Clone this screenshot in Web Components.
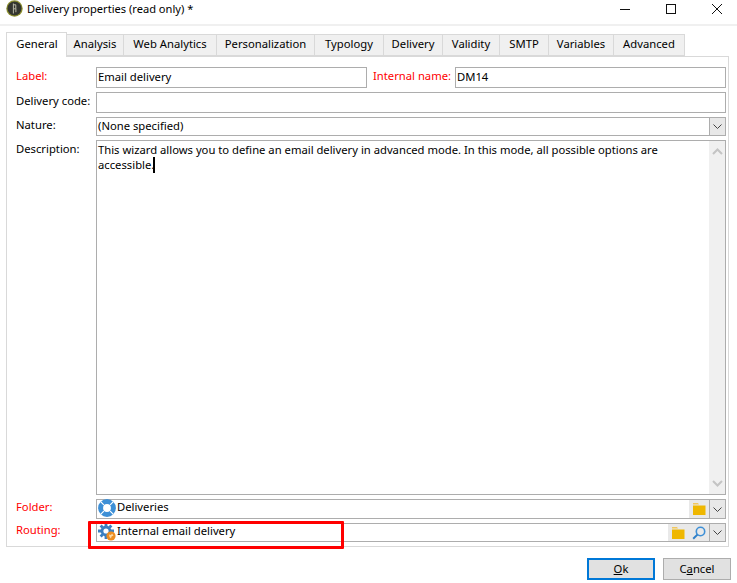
<!DOCTYPE html>
<html>
<head>
<meta charset="utf-8">
<title>Delivery properties</title>
<style>
  html, body { margin: 0; padding: 0; background: #fff; }
  body { font: 11.25px "Noto Sans", "Open Sans", sans-serif; color: #000; width: 737px; height: 583px; overflow: hidden; }
</style>
</head>
<body>
<delivery-window>
  <title-bar slot="title">Delivery properties (read only) *</title-bar>
  <tab-strip slot="tabs" active="General" tabs="General:61,Analysis:57,Web Analytics:93,Personalization:98,Typology:69,Delivery:59,Validity:57,SMTP:49,Variables:65,Advanced:71"></tab-strip>
  <general-form slot="body"></general-form>
  <dialog-button slot="buttons" default><u>O</u>k</dialog-button>
  <dialog-button slot="buttons">C<u>a</u>ncel</dialog-button>
</delivery-window>

<script>
const ICONS = {
  chevDown: `<svg width="11" height="7" viewBox="0 0 11 7"><path d="M1.5 1.5l4 4 4-4" fill="none" stroke="#444" stroke-width="1"/></svg>`,
  chevUp: `<svg width="11" height="7" viewBox="0 0 11 7"><path d="M1 6l4.5-4.5L10 6" fill="none" stroke="#c4c4c4" stroke-width="2"/></svg>`,
  chevDownPale: `<svg width="11" height="7" viewBox="0 0 11 7"><path d="M1 1l4.5 4.5L10 1" fill="none" stroke="#c4c4c4" stroke-width="2"/></svg>`,
  folder: `<svg width="13" height="12" viewBox="0 0 13 12"><path d="M0 0h5l1 1.5H0z" fill="#f2c75c"/><rect x="0" y="2.5" width="12.5" height="9.5" fill="#efb700"/></svg>`,
  search: `<svg width="14" height="14" viewBox="0 0 14 14"><circle cx="8.5" cy="5.5" r="4.2" fill="none" stroke="#3d8fd6" stroke-width="1.6"/><path d="M5.4 8.6L1.2 12.8" stroke="#2f7fc8" stroke-width="2"/></svg>`,
  ring: `<svg width="18" height="18" viewBox="0 0 18 18"><circle cx="9" cy="9" r="6.4" fill="none" stroke="#3d8fd6" stroke-width="5"/><path d="M9 0v4.5M9 13.5V18M0 9h4.5M13.5 9H18" stroke="#fff" stroke-width="1.2" transform="rotate(45 9 9)"/></svg>`,
  gear: `<svg width="18" height="18" viewBox="0 0 18 18"><g fill="#3b7fc0"><circle cx="8" cy="8" r="5.4"/><path d="M6.6 0h2.8v3H6.6zM6.6 13h2.8v3H6.6zM0 6.6h3v2.8H0zM13 6.6h3v2.8h-3zM1.6 3.4l2-2 2 2-2 2zM10.4 3.4l2-2 2 2-2 2zM1.6 12.6l2-2 2 2-2 2z"/></g><circle cx="8" cy="8" r="2.6" fill="#fff"/><circle cx="13" cy="13" r="4.6" fill="#ee8d1f"/><path d="M11 11.5l2 .5 1-1.5 1.5 2-2 1-.5 2-1.5-1.5z" fill="#fbd9a8"/></svg>`,
  logo: `<svg width="17" height="17" viewBox="0 0 17 17"><circle cx="8.5" cy="8.5" r="8.2" fill="#8d9030"/><circle cx="8.5" cy="8.5" r="7" fill="#34362f"/><path d="M7.4 3.5v10M7.4 4.8h2.4v4H7.4M9.9 8.8v3.4" fill="none" stroke="#b9b9a6" stroke-width="1"/></svg>`
};

class TitleBar extends HTMLElement {
  constructor() {
    super();
    this.attachShadow({ mode: 'open' });
    this.shadowRoot.innerHTML = `
      <style>
        :host { display: flex; align-items: center; height: 24px; padding: 0 2px 7px 6px; box-sizing: border-box; }
        .name { margin-left: 4px; flex: 1; line-height: 16px; font-size: 11.1px; }
        .ctl { display: flex; width: 36px; margin-left: 10px; justify-content: center; }
        svg { display: block; }
      </style>
      ${ICONS.logo}
      <span class="name"><slot></slot></span>
      <span class="ctl"><svg width="10" height="10" viewBox="0 0 10 10"><path d="M0 5.5h10" stroke="#111"/></svg></span>
      <span class="ctl"><svg width="10" height="10" viewBox="0 0 10 10"><rect x=".5" y=".5" width="9" height="9" fill="none" stroke="#111"/></svg></span>
      <span class="ctl"><svg width="10" height="10" viewBox="0 0 10 10"><path d="M0 0l10 10M10 0L0 10" stroke="#111"/></svg></span>`;
  }
}

class TabStrip extends HTMLElement {
  constructor() {
    super();
    this.attachShadow({ mode: 'open' });
  }
  connectedCallback() {
    const active = this.getAttribute('active');
    const tabs = this.getAttribute('tabs').split(',').map(t => t.split(':'));
    this.shadowRoot.innerHTML = `
      <style>
        :host { display: flex; align-items: flex-end; height: 24px; margin-left: 6px; position: relative; z-index: 1; }
        .tab { box-sizing: border-box; height: 22px; background: #f0f0f0; border: 1px solid #d9d9d9; border-left: 0;
          display: flex; align-items: center; justify-content: center; padding-bottom: 3px; white-space: nowrap; }
        .tab.on { height: 25px; margin-bottom: -1px; background: #fff; border-left: 1px solid #d9d9d9; border-bottom: 0; padding: 0 0 4px 1px; }
      </style>
      ${tabs.map(([name, w]) => `<div class="tab ${name === active ? 'on' : ''}" style="width:${w}px">${name}</div>`).join('')}`;
  }
}

class TextField extends HTMLElement {
  constructor() {
    super();
    this.attachShadow({ mode: 'open' });
    this.shadowRoot.innerHTML = `
      <style>
        :host { display: flex; align-items: center; box-sizing: border-box; border: 1px solid #adadad; background: #fff; padding-left: 1px; padding-bottom: 3px; min-width: 0; }
      </style>
      <slot></slot>`;
  }
}

class ComboField extends HTMLElement {
  constructor() {
    super();
    this.attachShadow({ mode: 'open' });
    this.shadowRoot.innerHTML = `
      <style>
        :host { display: flex; min-width: 0; }
        .box { flex: 1; display: flex; align-items: center; box-sizing: border-box; border: 1px solid #adadad; border-right: 0; min-width: 0; }
        .text { flex: 1; padding-left: 1px; display: flex; align-items: center; gap: 1px; height: 100%; padding-bottom: 2px; box-sizing: border-box; }
        .tools { display: flex; align-items: center; height: 100%; background: #e9e9e9; gap: 7px; padding: 0 3px 0 4px; }
        .drop { width: 17px; box-sizing: border-box; border: 1px solid #adadad; background: #e8e8e8; display: flex; align-items: center; justify-content: center; }
        ::slotted(svg) { display: block; }
      </style>
      <div class="box"><div class="text"><slot name="icon"></slot><slot></slot></div><div class="tools"><slot name="tool"></slot></div></div>
      <div class="drop">${ICONS.chevDown}</div>`;
    if (!this.querySelector('[slot=tool]')) this.shadowRoot.querySelector('.tools').style.display = 'none';
  }
}

class MemoField extends HTMLElement {
  constructor() {
    super();
    this.attachShadow({ mode: 'open' });
    this.shadowRoot.innerHTML = `
      <style>
        :host { display: flex; box-sizing: border-box; border: 1px solid #adadad; min-height: 0; background: #fff; }
        .text { flex: 1; padding: 1px 10px 0 1px; line-height: 15px; }
        .caret { display: inline-block; width: 2px; height: 16px; background: #000; vertical-align: -4px; margin-left: -1px; }
        .bar { width: 16px; background: #f0f0f0; display: flex; flex-direction: column; justify-content: space-between; align-items: center; padding: 7px 0; box-sizing: border-box; }
      </style>
      <div class="text"><slot></slot><span class="caret"></span></div>
      <div class="bar">${ICONS.chevUp}${ICONS.chevDownPale}</div>`;
  }
}

class GeneralForm extends HTMLElement {
  constructor() {
    super();
    this.attachShadow({ mode: 'open' });
    this.shadowRoot.innerHTML = `
      <style>
        :host { display: grid; box-sizing: border-box; height: 491px; margin: 0 8px 0 6px; border: 1px solid #d9d9d9; padding: 10px 2px 6px 9px; position: relative;
          grid-template-columns: 80px 271px 6px 82px 271px;
          grid-template-rows: 21px 21px 19px 355px 20px 19px; row-gap: 4px; }
        .req { color: #f00; }
        .lbl { line-height: 16px; white-space: nowrap; }
        .mid { display: flex; align-items: center; padding-bottom: 3px; }
        .up { padding-bottom: 5px; }
        .wide { grid-column: 2 / 6; }
        .mark { position: absolute; left: 81px; top: 464px; width: 250px; height: 22px; border: 3px solid #f00; border-radius: 1px; pointer-events: none; }
        .nudge { margin-top: -3px; }
        svg { display: block; }
        .desc { padding-top: 1px; }
      </style>
      <span class="lbl mid req">Label:</span>
      <text-field>Email delivery</text-field>
      <span></span>
      <span class="lbl mid req">Internal name:</span>
      <text-field>DM14</text-field>

      <span class="lbl mid">Delivery code:</span>
      <text-field class="wide"></text-field>

      <span class="lbl mid">Nature:</span>
      <combo-field class="wide">(None specified)</combo-field>

      <span class="lbl desc">Description:</span>
      <memo-field class="wide">This wizard allows you to define an email delivery in advanced mode. In this mode, all possible options are accessible.</memo-field>

      <span class="lbl mid up req">Folder:</span>
      <combo-field class="wide">${ICONS.ring.replace('<svg', '<svg slot="icon"')}<span class="nudge">Deliveries</span>${ICONS.folder.replace('<svg', '<svg slot="tool"')}</combo-field>

      <span class="lbl mid up req">Routing:</span>
      <combo-field class="wide">${ICONS.gear.replace('<svg', '<svg slot="icon"')}<span class="nudge">Internal email delivery</span>${ICONS.folder.replace('<svg', '<svg slot="tool"')}${ICONS.search.replace('<svg', '<svg slot="tool"')}</combo-field>

      <div class="mark"></div>`;
  }
}

class DialogButton extends HTMLElement {
  constructor() {
    super();
    this.attachShadow({ mode: 'open' });
    this.shadowRoot.innerHTML = `
      <style>
        :host { display: flex; align-items: center; justify-content: center; box-sizing: border-box; width: 68px; height: 22px; background: #e1e1e1; border: 1px solid #adadad; padding-bottom: 1px; }
        :host([default]) { border: 2px solid #0078d7; }
      </style>
      <slot></slot>`;
  }
}

class DeliveryWindow extends HTMLElement {
  constructor() {
    super();
    this.attachShadow({ mode: 'open' });
    this.shadowRoot.innerHTML = `
      <style>
        :host { display: block; }
        .band { height: 2px; background: #f0f0f0; margin-bottom: 6px; }
        .buttons { display: flex; justify-content: flex-end; gap: 8px; padding: 11px 6px 0 0; }
      </style>
      <slot name="title"></slot>
      <div class="band"></div>
      <slot name="tabs"></slot>
      <slot name="body"></slot>
      <div class="buttons"><slot name="buttons"></slot></div>`;
  }
}

customElements.define('title-bar', TitleBar);
customElements.define('tab-strip', TabStrip);
customElements.define('text-field', TextField);
customElements.define('combo-field', ComboField);
customElements.define('memo-field', MemoField);
customElements.define('general-form', GeneralForm);
customElements.define('dialog-button', DialogButton);
customElements.define('delivery-window', DeliveryWindow);
</script>
</body>
</html>
